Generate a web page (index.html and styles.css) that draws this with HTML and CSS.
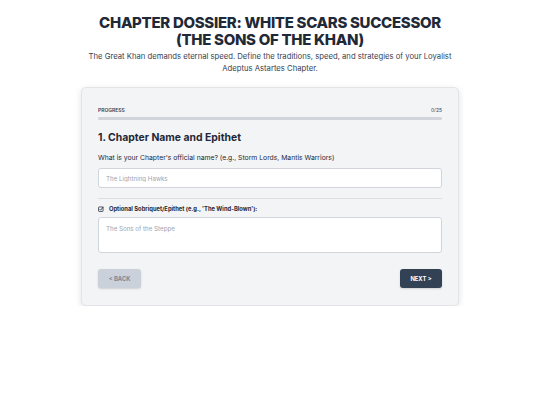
FILE: index.html
```html
<!DOCTYPE html>
<html lang="en">
<head>
  <meta charset="UTF-8">
  <title>Chapter Dossier - White Scars Successor</title>
  <link rel="stylesheet" href="styles.css">
</head>
<body>

<header class="intro">
  <h1>Chapter Dossier: White Scars Successor (The Sons of the Khan)</h1>
  <p>The Great Khan demands eternal speed. Define the traditions, speed, and strategies of your Loyalist Adeptus Astartes Chapter.</p>
</header>

<div class="card">
  <div class="progress-head">
    <span>Progress</span>
    <span>0/25</span>
  </div>
  <div class="progress-track"><div class="progress-fill" style="width: 0%"></div></div>

  <h2>1. Chapter Name and Epithet</h2>
  <label class="question" for="name">What is your Chapter's official name? (e.g., Storm Lords, Mantis Warriors)</label>
  <input id="name" type="text" placeholder="The Lightning Hawks">

  <hr>

  <label class="optional" for="epithet">
    <svg viewBox="0 0 16 16" width="6" height="6">
      <rect x="1.5" y="2.5" width="12" height="12" rx="1.5" fill="none" stroke="#1f2937" stroke-width="2"/>
      <path d="M4.5 8.5 L7 11 L14.5 2" fill="none" stroke="#1f2937" stroke-width="2.2"/>
    </svg>
    Optional Sobriquet/Epithet (e.g., 'The Wind-Blown'):
  </label>
  <textarea id="epithet" placeholder="The Sons of the Steppe"></textarea>

  <div class="nav">
    <button class="btn back" disabled>&lt; Back</button>
    <button class="btn next">Next &gt;</button>
  </div>
</div>

</body>
</html>
```

FILE: styles.css
```css
body {
  margin: 0;
  font-family: Inter, "Noto Sans", sans-serif;
  background: #ffffff;
  color: #1f2937;
}
.intro {
  text-align: center;
  padding-top: 14px;
  width: 376px;
  margin: 0 auto;
}
.intro h1 {
  margin: 0;
  font-size: 15px;
  line-height: 17px;
  font-weight: 800;
  text-transform: uppercase;
  letter-spacing: -0.02em;
  color: #1f2937;
}
.intro p {
  margin: 3px -4px 0;
  font-size: 7.7px;
  line-height: 12px;
  color: #374151;
}
.card {
  width: 344px;
  margin: 12px auto 0;
  padding: 18px 16px 17px;
  background: #f3f4f6;
  border: 1px solid #e2e4e8;
  border-radius: 5px;
  box-shadow: 0 2px 6px rgba(0, 0, 0, 0.12);
}
.progress-head {
  display: flex;
  justify-content: space-between;
  font-size: 5px;
  line-height: 8px;
  color: #374151;
}
.progress-head span:first-child {
  text-transform: uppercase;
  font-weight: 600;
}
.progress-track {
  height: 3px;
  margin-top: 3px;
  background: #d1d5db;
  border-radius: 2px;
}
.progress-fill {
  height: 100%;
  background: #334155;
}
h2 {
  margin: 11px 0 0;
  font-size: 10.4px;
  line-height: 14px;
  font-weight: 700;
  color: #1f2937;
}
.question {
  display: block;
  margin-top: 8px;
  font-size: 6.8px;
  line-height: 9px;
  color: #1f2937;
}
input, textarea {
  display: block;
  box-sizing: border-box;
  width: 100%;
  background: #fff;
  border: 1px solid #d1d5db;
  border-radius: 3px;
  font-family: inherit;
  font-size: 6.2px;
  color: #1f2937;
  padding: 0 7px;
}
input {
  height: 20px;
  margin-top: 6px;
}
textarea {
  height: 36px;
  padding-top: 7px;
  resize: none;
}
::placeholder {
  color: #9ca3af;
}
hr {
  border: 0;
  border-top: 1px solid #dcdfe4;
  margin: 10px 0 0;
}
.optional {
  display: flex;
  align-items: center;
  gap: 5px;
  margin-top: 6px;
  font-size: 5.8px;
  line-height: 8px;
  font-weight: 700;
  color: #1f2937;
}
.optional + textarea {
  margin-top: 4px;
}
.nav {
  display: flex;
  justify-content: space-between;
  margin-top: 16px;
}
.btn {
  height: 19px;
  padding: 0 9px;
  border: 0;
  border-radius: 3px;
  font-family: inherit;
  font-size: 5.8px;
  font-weight: 700;
  text-transform: uppercase;
  box-shadow: 0 1px 2px rgba(0, 0, 0, 0.15);
}
.back {
  width: 43px;
  background: #cbd1da;
  color: #7b8594;
}
.next {
  width: 42px;
  background: #334155;
  color: #fff;
}
```
